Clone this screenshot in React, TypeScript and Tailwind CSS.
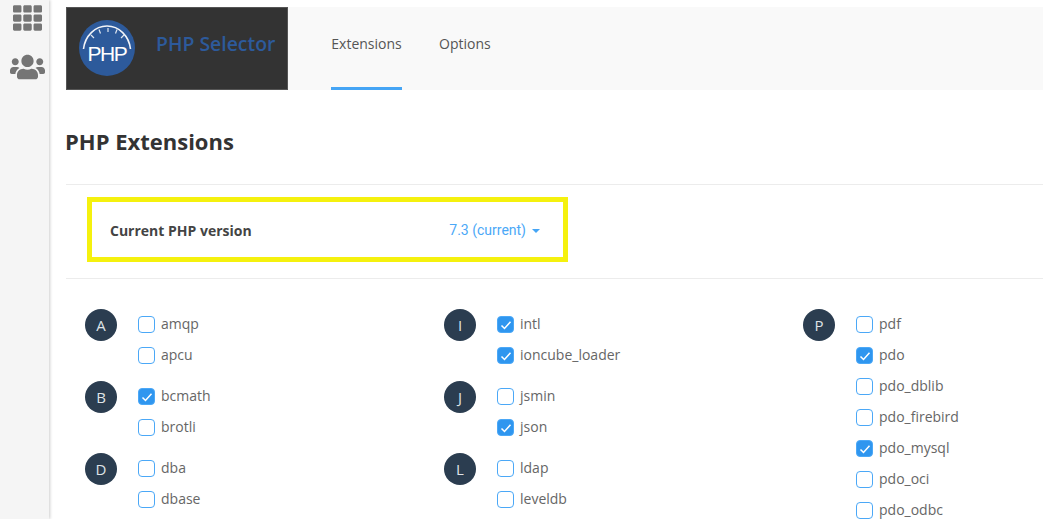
import React from "react";
import { FaTh, FaUsers } from "react-icons/fa";

type Ext = { name: string; on?: boolean };
type Group = { letter: string; items: Ext[] };

const columns: Group[][] = [
  [
    { letter: "A", items: [{ name: "amqp" }, { name: "apcu" }] },
    { letter: "B", items: [{ name: "bcmath", on: true }, { name: "brotli" }] },
    { letter: "D", items: [{ name: "dba" }, { name: "dbase" }] },
  ],
  [
    { letter: "I", items: [{ name: "intl", on: true }, { name: "ioncube_loader", on: true }] },
    { letter: "J", items: [{ name: "jsmin" }, { name: "json", on: true }] },
    { letter: "L", items: [{ name: "ldap" }, { name: "leveldb" }] },
  ],
  [
    {
      letter: "P",
      items: [
        { name: "pdf" },
        { name: "pdo", on: true },
        { name: "pdo_dblib" },
        { name: "pdo_firebird" },
        { name: "pdo_mysql", on: true },
        { name: "pdo_oci" },
        { name: "pdo_odbc" },
      ],
    },
  ],
];

function Check({ on }: { on?: boolean }) {
  return (
    <span
      className={
        "flex h-[17px] w-[17px] shrink-0 items-center justify-center rounded-[4px] border-[1.5px] border-[#4ba8f7] " +
        (on ? "bg-[#2f96ef]" : "bg-white")
      }
    >
      {on && (
        <svg viewBox="0 0 12 12" className="h-[12px] w-[12px]" fill="none" stroke="#fff" strokeWidth="1.5">
          <path d="M1.5 6.5 L4.5 9.5 L10.5 2.8" />
        </svg>
      )}
    </span>
  );
}

function Logo() {
  return (
    <svg viewBox="0 0 56 56" className="h-[56px] w-[56px]">
      <circle cx="28" cy="28" r="28" fill="#2d5a9b" />
      <path d="M4.5 29 C6 16 16 6 28 6 C40 6 50 16 51.5 29" fill="none" stroke="#f2f4f8" strokeWidth="1.6" />
      <path d="M12 15 L15 18 M20 9.5 L21.5 13.5 M29 8 L29 12 M38 9.5 L36.5 13.5 M45 15 L42 18" stroke="#dfe6f0" strokeWidth="1.2" />
      <text x="28" y="41" textAnchor="middle" fill="#fff" fontSize="21" letterSpacing="-1.4" fontFamily="'Liberation Sans', sans-serif">
        PHP
      </text>
    </svg>
  );
}

export default function App() {
  return (
    <div className="flex h-[519px] w-[1043px] overflow-hidden bg-white font-['Open_Sans',sans-serif]">
      <aside className="flex w-[49px] shrink-0 flex-col items-center bg-[#f5f5f5] pt-[2px] pl-[5px] text-[#757575] shadow-[1px_0_3px_rgba(0,0,0,0.2)]">
        <FaTh className="h-[32px] w-[29px]" />
        <FaUsers className="mt-[19px] h-[28px] w-[35px]" />
      </aside>
      <main className="min-w-0 flex-1 pl-[17px] pt-[7px]">
        <header className="flex h-[83px] bg-[#f9f9f9]">
          <div className="flex w-[222px] items-center border border-[#555] bg-[#333333] pl-[12px]">
            <span className="mt-[-1px] flex">
              <Logo />
            </span>
            <span className="mt-[-9px] ml-[21px] text-[19.4px] font-semibold whitespace-nowrap text-[#2d5a9b]">PHP Selector</span>
          </div>
          <nav className="ml-[43px] flex gap-[37px] text-[14px] text-[#555]">
            <span className="flex w-[71px] items-center justify-center border-b-[3px] border-[#45a5f5] pb-[7px]">Extensions</span>
            <span className="flex items-center border-b-[3px] border-transparent pb-[7px]">Options</span>
          </nav>
        </header>
        <h1 className="mt-[35px] -ml-[1px] text-[22px] leading-[32px] font-bold text-[#333]">PHP Extensions</h1>
        <div className="mt-[27px] h-[1px] bg-[#ececec]" />
        <div className="mt-[12px] ml-[21px] flex h-[65px] w-[481px] items-center justify-between border-[5px] border-[#f5f10e] pt-[1px] pr-[23px] pl-[18px]">
          <span className="text-[14px] font-bold text-[#444]">Current PHP version</span>
          <span className="flex items-center font-['Roboto',sans-serif] text-[14px] text-[#4ba8f7]">
            7.3 (current)
            <span className="mt-[1px] ml-[6px] h-0 w-0 border-x-[4px] border-t-[4px] border-x-transparent border-t-[#45a5f5]" />
          </span>
        </div>
        <div className="mt-[16px] h-[1px] bg-[#ececec]" />
        <div className="mt-[30px] ml-[19px] flex">
          {columns.map((col) => (
            <div key={col[0].letter} className="flex w-[359px] shrink-0 flex-col gap-[10px]">
              {col.map((g) => (
                <div key={g.letter} className="flex">
                  <span className="flex h-[32px] w-[32px] shrink-0 items-center justify-center rounded-full bg-[#2b3d50] text-[15px] text-[#dfe3e7]">
                    {g.letter}
                  </span>
                  <ul className="ml-[21px]">
                    {g.items.map((e) => (
                      <li key={e.name} className="flex h-[31px] items-center gap-[6px] text-[14px] text-[#666]">
                        <Check on={e.on} />
                        <span className="-mt-[3px]">{e.name}</span>
                      </li>
                    ))}
                  </ul>
                </div>
              ))}
            </div>
          ))}
        </div>
      </main>
    </div>
  );
}
